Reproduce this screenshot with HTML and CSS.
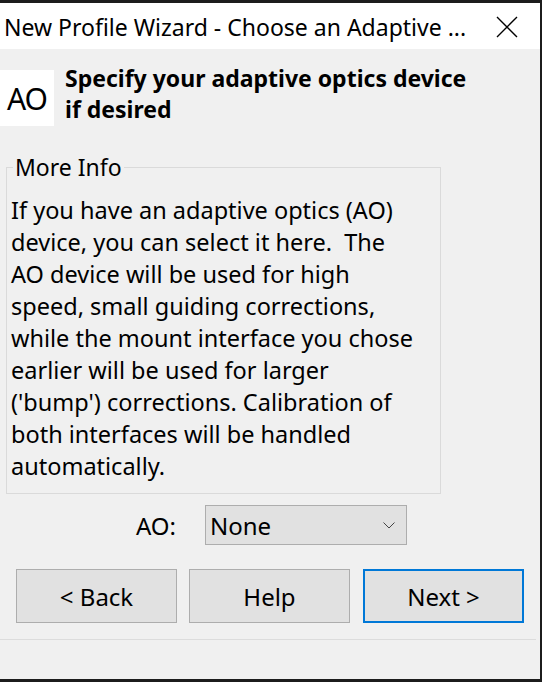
FILE: index.html
```html
<!DOCTYPE html>
<html>
<head>
<meta charset="utf-8">
<link rel="stylesheet" href="styles.css">
</head>
<body>
<div class="window">
  <div class="titlebar">
    <span class="title">New Profile Wizard - Choose an Adaptive ...</span>
    <svg class="close" width="22" height="22" viewBox="0 0 22 22"><path d="M1 1 L21 21 M21 1 L1 21" stroke="#000" stroke-width="1.4" fill="none"/></svg>
  </div>
  <div class="content">
    <div class="header">
      <div class="logo">AO</div>
      <h1 class="heading">Specify your adaptive optics device<br>if desired</h1>
    </div>
    <fieldset class="group">
      <legend class="legend">More Info</legend>
      <p class="info">If you have an adaptive optics (AO)<br>device, you can select it here.&nbsp; The<br>AO device will be used for high<br>speed, small guiding corrections,<br>while the mount interface you chose<br>earlier will be used for larger<br>('bump') corrections. Calibration of<br>both interfaces will be handled<br>automatically.</p>
    </fieldset>
    <div class="aorow">
      <span class="aolabel">AO:</span>
      <div class="select">
        <span>None</span>
        <svg width="12" height="7" viewBox="0 0 12 7"><path d="M0.5 0.5 L6 6 L11.5 0.5" stroke="#444" stroke-width="1" fill="none"/></svg>
      </div>
    </div>
    <div class="buttons">
      <div class="btn">&lt; Back</div>
      <div class="btn">Help</div>
      <div class="btn default">Next &gt;</div>
    </div>
    <div class="sep"></div>
  </div>
</div>
</body>
</html>
```

FILE: styles.css
```css
html, body {
  margin: 0;
  padding: 0;
  background: #1c1c1c;
}
.window {
  width: 542px;
  height: 682px;
  box-sizing: border-box;
  border-top: 3px solid #1c1c1c;
  border-right: 2px solid #1c1c1c;
  border-bottom: 3px solid #1c1c1c;
  display: flex;
  flex-direction: column;
  font-family: "Noto Sans", "Open Sans", sans-serif;
  color: #000;
}
.titlebar {
  height: 46px;
  background: #fff;
  display: flex;
  align-items: center;
  justify-content: space-between;
  padding: 0 22px 0 4px;
}
.title {
  font-size: 23px;
  margin-top: 1px;
}
.close {
  display: block;
  margin-top: 1px;
}
.content {
  flex: 1;
  background: #f0f0f0;
  display: flex;
  flex-direction: column;
}
.header {
  display: flex;
  margin-top: 21px;
  align-items: flex-start;
}
.logo {
  width: 54px;
  height: 56px;
  background: #fff;
  font-size: 30px;
  display: flex;
  align-items: center;
  justify-content: center;
  letter-spacing: -1px;
}
.heading {
  margin: -7px 0 0 11px;
  font-size: 23px;
  font-weight: bold;
  line-height: 31px;
  white-space: nowrap;
}
.group {
  margin: 29px 0 0 6px;
  width: 435px;
  height: 339px;
  box-sizing: border-box;
  border: 1px solid #dadada;
  padding: 0 4px;
  min-width: 0;
}
.legend {
  font-size: 23px;
  padding: 0 2px;
  margin-left: 2px;
  line-height: 24px;
}
.info {
  margin: 15px 0 0 0;
  font-size: 23.5px;
  line-height: 32px;
  white-space: nowrap;
}
.aorow {
  display: flex;
  align-items: center;
  margin-top: 11px;
}
.aolabel {
  width: 176px;
  text-align: right;
  font-size: 24px;
}
.select {
  margin-left: 29px;
  width: 202px;
  height: 40px;
  box-sizing: border-box;
  background: #e1e1e1;
  border: 1px solid #adadad;
  display: flex;
  align-items: center;
  justify-content: space-between;
  padding: 0 11px 0 4px;
  font-size: 24px;
}
.buttons {
  display: flex;
  gap: 12px;
  margin: 24px 0 0 16px;
}
.btn {
  width: 161px;
  height: 54px;
  box-sizing: border-box;
  background: #e1e1e1;
  border: 1px solid #adadad;
  display: flex;
  align-items: center;
  justify-content: center;
  font-size: 24px;
}
.btn.default {
  border: 2px solid #0078d7;
  margin-left: 1px;
}
.sep {
  margin-top: 16px;
  height: 1px;
  background: #dcdcdc;
  width: 536px;
}
```
